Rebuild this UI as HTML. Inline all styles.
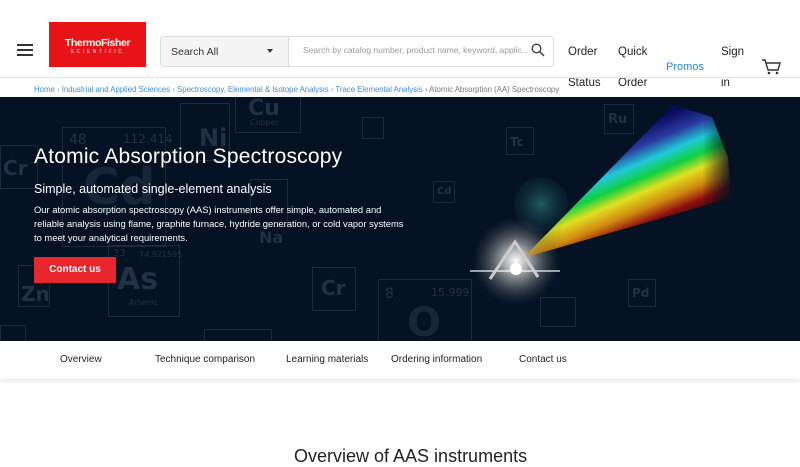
<!DOCTYPE html>
<html><head><meta charset="utf-8"><style>
*{margin:0;padding:0;box-sizing:border-box}
body{width:800px;height:450px;overflow:hidden;background:#fff;font-family:"Liberation Sans",sans-serif;position:relative}
.a{position:absolute}
.el{position:absolute;border:1px solid #1c2a3e;color:#223145;font-family:"DejaVu Sans","Liberation Sans",sans-serif}
.el b{position:absolute;font-weight:bold}
.el i{position:absolute;font-style:normal}
</style></head><body>
<!-- header -->
<div class="a" style="left:17px;top:44px;width:16px;height:2px;background:#333;box-shadow:0 5px 0 #333,0 10px 0 #333"></div>
<div class="a" style="left:49px;top:22px;width:97px;height:45px;background:#e71316;color:#fff;text-align:center">
 <div style="font-weight:bold;font-size:10.5px;letter-spacing:-0.4px;margin-top:15px">ThermoFisher</div>
 <div style="font-size:5px;letter-spacing:2.6px;margin-top:0px">SCIENTIFIC</div>
</div>
<div class="a" style="left:160px;top:36px;width:394px;height:31px;border:1px solid #ddd;border-radius:3px;background:#fff"></div>
<div class="a" style="left:161px;top:37px;width:128px;height:29px;background:#f4f4f4;border-right:1px solid #ddd;font-size:10.5px;color:#333;padding:9px 0 0 10px">Search All</div>
<div class="a" style="left:267px;top:49px;border-left:3.5px solid transparent;border-right:3.5px solid transparent;border-top:4px solid #333"></div>
<div class="a" style="left:303px;top:45px;font-size:8.5px;color:#999">Search by catalog number, product name, keyword, applic...</div>
<svg class="a" style="left:531px;top:43px" width="14" height="14"><circle cx="5.5" cy="5.5" r="4.3" fill="none" stroke="#444" stroke-width="1.4"/><path d="M8.7 8.7L13 13" stroke="#444" stroke-width="1.5"/></svg>
<div class="a" style="left:568px;top:37px;font-size:11.5px;color:#222;line-height:31px">Order<br>Status</div>
<div class="a" style="left:618px;top:37px;font-size:11.5px;color:#222;line-height:31px">Quick<br>Order</div>
<div class="a" style="left:666px;top:61px;font-size:11px;color:#2a86d4">Promos</div>
<div class="a" style="left:721px;top:37px;font-size:11.5px;color:#222;line-height:31px">Sign<br>in</div>
<svg class="a" style="left:761px;top:58px" width="20" height="17"><path d="M1 2H4L7 12H17L19 5H5" fill="none" stroke="#333" stroke-width="1.4"/><circle cx="8" cy="15" r="1.3" fill="#333"/><circle cx="16" cy="15" r="1.3" fill="#333"/></svg>
<div class="a" style="left:0;top:77px;width:800px;height:1px;background:#e4e4e4"></div>
<div class="a" style="left:34px;top:85px;font-size:7.8px;color:#3a8fd6;white-space:nowrap">Home <span style="color:#999">›</span> Industrial and Applied Sciences <span style="color:#999">›</span> Spectroscopy, Elemental &amp; Isotope Analysis <span style="color:#999">›</span> Trace Elemental Analysis <span style="color:#777">› Atomic Absorption (AA) Spectroscopy</span></div>
<!-- hero -->
<div class="a" style="left:0;top:97px;width:800px;height:244px;background:#041224;overflow:hidden">
 <div class="el" style="left:0;top:48px;width:38px;height:44px"><b style="left:2px;top:10px;font-size:20px">Cr</b></div>
 <div class="el" style="left:62px;top:30px;width:104px;height:120px"><i style="left:6px;top:4px;font-size:14px">48</i><i style="left:60px;top:4px;font-size:12px">112.414</i><b style="left:20px;top:30px;font-size:50px;color:#18263a">Cd</b></div>
 <div class="el" style="left:180px;top:6px;width:50px;height:58px"><b style="left:18px;top:20px;font-size:24px">Ni</b></div>
 <div class="el" style="left:235px;top:-6px;width:66px;height:42px"><b style="left:12px;top:4px;font-size:22px">Cu</b><i style="left:14px;top:26px;font-size:8px">Copper</i></div>
 <div class="el" style="left:250px;top:82px;width:38px;height:48px"><b style="left:8px;top:48px;font-size:16px">Na</b></div>
 <div class="el" style="left:108px;top:148px;width:72px;height:72px"><i style="left:4px;top:2px;font-size:10px">33</i><i style="left:30px;top:4px;font-size:8px">74.921595</i><b style="left:8px;top:16px;font-size:30px">As</b><i style="left:20px;top:52px;font-size:8px">Arsenic</i></div>
 <div class="el" style="left:18px;top:168px;width:32px;height:42px"><b style="left:2px;top:16px;font-size:20px">Zn</b></div>
 <div class="el" style="left:312px;top:170px;width:44px;height:44px"><b style="left:8px;top:8px;font-size:20px">Cr</b></div>
 <div class="el" style="left:378px;top:182px;width:94px;height:80px"><i style="left:6px;top:6px;font-size:14px">8</i><i style="left:52px;top:6px;font-size:11px">15.999</i><b style="left:28px;top:20px;font-size:40px;color:#18263a">O</b></div>
 <div class="el" style="left:362px;top:20px;width:22px;height:22px"></div>
 <div class="el" style="left:433px;top:84px;width:22px;height:22px"><b style="left:3px;top:4px;font-size:10px">Cd</b></div>
 <div class="el" style="left:506px;top:30px;width:28px;height:28px"><b style="left:3px;top:7px;font-size:12px">Tc</b></div>
 <div class="el" style="left:604px;top:7px;width:30px;height:30px"><b style="left:3px;top:7px;font-size:13px">Ru</b></div>
 <div class="el" style="left:628px;top:182px;width:28px;height:28px"><b style="left:3px;top:6px;font-size:12px">Pd</b></div>
 <div class="el" style="left:540px;top:200px;width:36px;height:30px"></div>
 <div class="el" style="left:0px;top:228px;width:26px;height:20px"></div>
 <div class="el" style="left:204px;top:232px;width:68px;height:20px"></div>
 <svg class="a" style="left:0;top:0" width="800" height="244">
  <defs>
   <radialGradient id="g1"><stop offset="0" stop-color="#fff"/><stop offset=".25" stop-color="#ddd" stop-opacity=".8"/><stop offset="1" stop-color="#555" stop-opacity="0"/></radialGradient>
   <radialGradient id="g2"><stop offset="0" stop-color="#1f5a64"/><stop offset="1" stop-color="#103038" stop-opacity=".3"/></radialGradient>
   <linearGradient id="rb" gradientUnits="userSpaceOnUse" x1="650" y1="25" x2="690" y2="120">
    <stop offset="0" stop-color="#0a0a60"/><stop offset=".18" stop-color="#2a3aa0"/><stop offset=".33" stop-color="#20c8d8"/><stop offset=".47" stop-color="#10d040"/><stop offset=".6" stop-color="#e0e020"/><stop offset=".75" stop-color="#d08a10"/><stop offset=".88" stop-color="#901010"/><stop offset="1" stop-color="#300808"/>
   </linearGradient>
   <linearGradient id="fade" gradientUnits="userSpaceOnUse" x1="520" y1="0" x2="735" y2="0"><stop offset="0" stop-color="#fff" stop-opacity=".6"/><stop offset=".2" stop-color="#fff"/><stop offset=".85" stop-color="#fff"/><stop offset="1" stop-color="#fff" stop-opacity="0"/></linearGradient>
   <mask id="m"><rect x="500" y="0" width="240" height="244" fill="url(#fade)"/></mask>
  </defs>
  <circle cx="541" cy="107" r="27" fill="url(#g2)"/>
  <circle cx="516" cy="164" r="44" fill="url(#g1)"/>
  <polygon points="523,161 673,8 712,20 728,60 731,101" fill="url(#rb)" mask="url(#m)"/>
  <path d="M470 174H560" stroke="#fff" stroke-width="1.5" opacity=".8"/>
  <path d="M490 182L515 145L538 180" fill="none" stroke="#ccc" stroke-width="3"/>
  <circle cx="516" cy="172" r="6" fill="#fff"/>
 </svg>
 <div class="a" style="left:34px;top:48px;font-size:21px;color:#fff;letter-spacing:0.2px">Atomic Absorption Spectroscopy</div>
 <div class="a" style="left:34px;top:85px;font-size:12.5px;color:#fff">Simple, automated single-element analysis</div>
 <div class="a" style="left:34px;top:106px;font-size:9.4px;color:#fff;line-height:14px;width:370px">Our atomic absorption spectroscopy (AAS) instruments offer simple, automated and reliable analysis using flame, graphite furnace, hydride generation, or cold vapor systems to meet your analytical requirements.</div>
 <div class="a" style="left:34px;top:160px;width:82px;height:26px;background:#e8262d;color:#fff;font-weight:bold;font-size:10px;text-align:center;line-height:26px">Contact us</div>
</div>
<!-- tabs -->
<div class="a" style="left:0;top:341px;width:800px;height:38px;background:#fff;box-shadow:0 3px 4px rgba(0,0,0,.08)"></div>
<div class="a" style="top:354px;left:60px;font-size:10px;color:#222">Overview</div>
<div class="a" style="top:354px;left:155px;font-size:10px;color:#222">Technique comparison</div>
<div class="a" style="top:354px;left:286px;font-size:10px;color:#222">Learning materials</div>
<div class="a" style="top:354px;left:391px;font-size:10px;color:#222">Ordering information</div>
<div class="a" style="top:354px;left:519px;font-size:10px;color:#222">Contact us</div>
<div class="a" style="top:446px;left:294px;font-size:18px;color:#222">Overview of AAS instruments</div>
</body></html>
